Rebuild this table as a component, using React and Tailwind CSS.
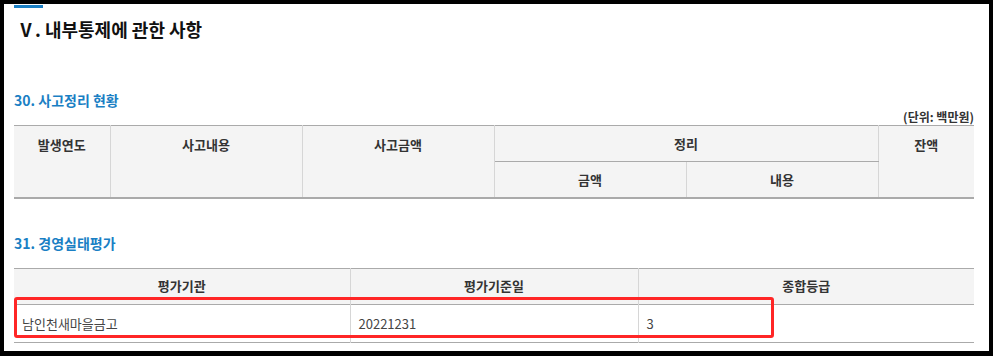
const font = { fontFamily: '"Noto Sans CJK KR", "Noto Sans", sans-serif' };

const th = 'border-l border-[#d6d6d6] text-[13px] font-bold text-[#333] text-center first:border-l-0';

export default function App() {
  return (
    <div className="flex h-[356px] w-[993px] bg-black pb-[5px] pl-[4px] pr-[4px] pt-[4px]" style={font}>
      <div className="relative flex-1 bg-white pl-[10px] pr-[15px]">
        <div className="mt-[1px] h-[3px] w-[29px] bg-[#1a7fc4]" />
        <h2 className="ml-[3px] mt-[8px] text-[18px] font-bold leading-[26px] text-[#111]">Ⅴ. 내부통제에 관한 사항</h2>

        <h3 className="mt-[48px] text-[14px] font-bold leading-[20px] text-[#1a7fc4]">30. 사고정리 현황</h3>
        <p className="mt-[-1px] text-right text-[12px] font-bold leading-[16px] text-[#333]">(단위: 백만원)</p>
        <table className="w-[960px] table-fixed border-collapse border-b-2 border-t border-b-[#aaa] border-t-[#aaa] bg-[#f4f4f4]">
          <colgroup>
            <col className="w-[96px]" />
            <col className="w-[192px]" />
            <col className="w-[192px]" />
            <col className="w-[192px]" />
            <col className="w-[192px]" />
            <col className="w-[96px]" />
          </colgroup>
          <tbody>
            <tr className="h-[36px]">
              <td rowSpan={2} className={`${th} align-top pt-[9px]`}>발생연도</td>
              <td rowSpan={2} className={`${th} align-top pt-[9px]`}>사고내용</td>
              <td rowSpan={2} className={`${th} border-r align-top pt-[9px]`}>사고금액</td>
              <td colSpan={2} className={`${th} border-b border-b-[#aaa]`}>정리</td>
              <td rowSpan={2} className={`${th} align-top pt-[9px]`}>잔액</td>
            </tr>
            <tr className="h-[36px]">
              <td className={`${th} border-l-[#d6d6d6]`}>금액</td>
              <td className={`${th} border-r`}>내용</td>
            </tr>
          </tbody>
        </table>

        <h3 className="mt-[34px] text-[14px] font-bold leading-[20px] text-[#1a7fc4]">31. 경영실태평가</h3>
        <table className="mt-[15px] w-[960px] table-fixed border-collapse border-t border-t-[#aaa]">
          <colgroup>
            <col className="w-[336px]" />
            <col className="w-[288px]" />
            <col className="w-[336px]" />
          </colgroup>
          <tbody>
            <tr className="h-[36px] border-b border-b-[#aaa] bg-[#f4f4f4]">
              <td className={th}>평가기관</td>
              <td className={th}>평가기준일</td>
              <td className={th}>종합등급</td>
            </tr>
            <tr className="h-[38px] border-b border-b-[#aaa] text-[13px] text-[#444]">
              <td className="pl-[8px] pt-[2px]">남인천새마을금고</td>
              <td className="border-l border-[#d6d6d6] pl-[8px] pt-[2px]">20221231</td>
              <td className="border-l border-[#d6d6d6] pl-[8px] pt-[2px]">3</td>
            </tr>
          </tbody>
        </table>

        <div className="pointer-events-none absolute left-[10px] top-[293px] h-[41px] w-[760px] rounded-[3px] border-[3px] border-[#ff2626]" />
      </div>
    </div>
  );
}
